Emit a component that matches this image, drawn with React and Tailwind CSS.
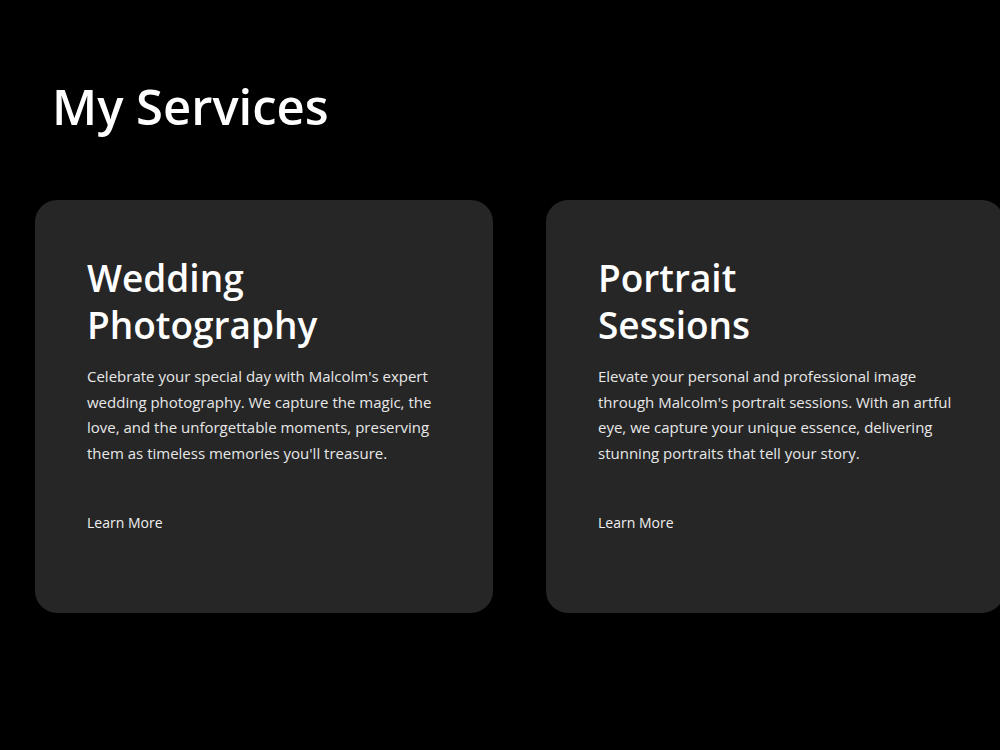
import React from "react";

const services = [
  {
    title: ["Wedding", "Photography"],
    text: "Celebrate your special day with Malcolm's expert wedding photography. We capture the magic, the love, and the unforgettable moments, preserving them as timeless memories you'll treasure.",
  },
  {
    title: ["Portrait", "Sessions"],
    text: "Elevate your personal and professional image through Malcolm's portrait sessions. With an artful eye, we capture your unique essence, delivering stunning portraits that tell your story.",
  },
];

const ServiceCard = ({ title, text }) => {
  return (
    <div className="w-[458px] h-[413px] shrink-0 rounded-[22px] bg-[#262626] pl-[52px] pr-[50px] pt-[54px]">
      <h2 className="text-[37px] leading-[47px] font-semibold text-white">
        {title[0]}
        <br />
        {title[1]}
      </h2>
      <p className="mt-[16px] text-[15px] leading-[25.5px] text-[#e8e8e8]">
        {text}
      </p>
      <a className="block mt-[46px] text-[14px] text-[#f0f0f0]">Learn More</a>
    </div>
  );
};

const App = () => {
  return (
    <div
      className="w-[1000px] h-[750px] overflow-hidden bg-black"
      style={{ fontFamily: '"Open Sans", sans-serif' }}
    >
      <h1 className="pl-[52px] pt-[74px] text-[49px] leading-[64px] font-semibold text-white">
        My Services
      </h1>
      <div className="flex gap-[53px] pl-[35px] mt-[62px]">
        {services.map((s) => (
          <ServiceCard key={s.title[0]} title={s.title} text={s.text} />
        ))}
      </div>
    </div>
  );
};

export default App;
